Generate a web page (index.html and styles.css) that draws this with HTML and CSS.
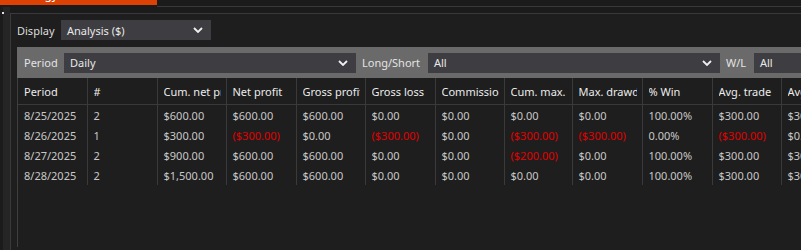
FILE: index.html
```html
<!DOCTYPE html>
<html lang="en">
<head>
  <meta charset="UTF-8" />
  <title>Strategy Analyzer</title>
  <link rel="stylesheet" href="styles.css">
</head>
<body>

  <div class="tabstrip">
    <div class="tab"><span>Strategy</span></div>
    <div class="tabline"></div>
  </div>

  <div class="workspace">
    <div class="rail"><span class="dot"></span></div>

    <div class="panel">
      <div class="display-row">
        <span class="label">Display</span>
        <div class="select">
          <span>Analysis ($)</span>
          <svg class="chev" width="10" height="6" viewBox="0 0 10 6"><polyline points="1,1 5,5 9,1" /></svg>
        </div>
      </div>

      <div class="gridbox">
        <div class="filters">
          <span class="flabel">Period</span>
          <div class="select">
            <span>Daily</span>
            <svg class="chev" width="10" height="6" viewBox="0 0 10 6"><polyline points="1,1 5,5 9,1" /></svg>
          </div>
          <span class="flabel">Long/Short</span>
          <div class="select">
            <span>All</span>
            <svg class="chev" width="10" height="6" viewBox="0 0 10 6"><polyline points="1,1 5,5 9,1" /></svg>
          </div>
          <span class="flabel">W/L</span>
          <div class="select">
            <span>All</span>
          </div>
        </div>

        <table class="results">
          <colgroup>
            <col style="width:69px"><col style="width:70px"><col style="width:69px"><col style="width:70px">
            <col style="width:69px"><col style="width:70px"><col style="width:69px"><col style="width:68px">
            <col style="width:70px"><col style="width:70px"><col style="width:69px"><col style="width:80px">
          </colgroup>
          <thead>
            <tr>
              <th><div>Period</div></th>
              <th><div>#</div></th>
              <th><div>Cum. net profit</div></th>
              <th><div>Net profit</div></th>
              <th><div>Gross profit</div></th>
              <th><div>Gross loss</div></th>
              <th><div>Commission</div></th>
              <th><div>Cum. max. run-up</div></th>
              <th><div>Max. drawdown</div></th>
              <th><div>% Win</div></th>
              <th><div>Avg. trade</div></th>
              <th><div>Avg. winner</div></th>
            </tr>
          </thead>
          <tbody>
            <tr>
              <td>8/25/2025</td><td>2</td><td>$600.00</td><td>$600.00</td><td>$600.00</td><td>$0.00</td>
              <td>$0.00</td><td>$0.00</td><td>$0.00</td><td>100.00%</td><td>$300.00</td><td>$300.00</td>
            </tr>
            <tr>
              <td>8/26/2025</td><td>1</td><td>$300.00</td><td class="neg">($300.00)</td><td>$0.00</td><td class="neg">($300.00)</td>
              <td>$0.00</td><td class="neg">($300.00)</td><td class="neg">($300.00)</td><td>0.00%</td><td class="neg">($300.00)</td><td>$0.00</td>
            </tr>
            <tr>
              <td>8/27/2025</td><td>2</td><td>$900.00</td><td>$600.00</td><td>$600.00</td><td>$0.00</td>
              <td>$0.00</td><td class="neg">($200.00)</td><td>$0.00</td><td>100.00%</td><td>$300.00</td><td>$300.00</td>
            </tr>
            <tr>
              <td>8/28/2025</td><td>2</td><td>$1,500.00</td><td>$600.00</td><td>$600.00</td><td>$0.00</td>
              <td>$0.00</td><td>$0.00</td><td>$0.00</td><td>100.00%</td><td>$300.00</td><td>$300.00</td>
            </tr>
          </tbody>
        </table>
      </div>
    </div>
  </div>

</body>
</html>
```

FILE: styles.css
```css
body {
  margin: 0;
  height: 250px;
  overflow: hidden;
  background-color: #1b1b1c;
  color: #dcdcdc;
  font-family: "Noto Sans", "Open Sans", sans-serif;
  font-size: 11px;
}

/* Barra de abas */
.tabstrip {
  display: flex;
  height: 7px;
}

.tab {
  width: 157px;
  height: 5px;
  background-color: #dd4204;
  color: white;
  overflow: hidden;
  position: relative;
}

.tab span {
  position: absolute;
  left: 11px;
  bottom: 4px;
  font-size: 12px;
  line-height: 12px;
}

.tabline {
  flex: 1;
  height: 6px;
  border-bottom: 1px solid #3a3a3c;
}

.workspace {
  display: flex;
  height: 243px;
}

.rail {
  width: 10px;
  background-color: #252526;
  border-left: 3px solid #1b1b1c;
  box-sizing: border-box;
  position: relative;
}

.dot {
  position: absolute;
  left: -1px;
  top: 5px;
  width: 2px;
  height: 2px;
  background-color: #e0e0e0;
}

.panel {
  flex: 1;
  margin-top: 6px;
  border-top: 1px solid #3a3a3c;
  border-left: 1px solid #3a3a3c;
  background-color: #1e1e1e;
  padding: 6px 0 0 6px;
  min-width: 0;
}

.display-row {
  display: grid;
  grid-template-columns: 38px 150px;
  column-gap: 6px;
  align-items: center;
  height: 20px;
}

.label {
  color: #dcdcdc;
}

.select {
  display: flex;
  align-items: center;
  justify-content: space-between;
  box-sizing: border-box;
  height: 20px;
  padding: 0 8px 0 6px;
  background-color: #3e3e42;
  color: #e8e8e8;
  overflow: hidden;
  white-space: nowrap;
}

.chev {
  fill: none;
  stroke: #f0f0f0;
  stroke-width: 1.8;
  flex-shrink: 0;
}

.gridbox {
  margin-top: 7px;
  border-left: 1px solid #3f3f41;
  height: 200px;
}

.filters {
  display: grid;
  grid-template-columns: 34px 292px 60px 292px 22px 1fr;
  column-gap: 6px;
  align-items: center;
  height: 31px;
  padding-left: 7px;
  background-color: #6a6a6a;
  white-space: nowrap;
  margin-left: -1px;
}

.flabel {
  color: #e4e4e4;
}

/* Tabela de resultados */
.results {
  border-collapse: collapse;
  table-layout: fixed;
  width: 824px;
}

.results th,
.results td {
  border-right: 1px solid #3a3a3c;
  padding: 0 0 0 6px;
  text-align: left;
  white-space: nowrap;
  overflow: hidden;
}

.results th {
  height: 26px;
  font-weight: normal;
  color: #ececec;
  border-bottom: 1px solid #3a3a3c;
}

.results th div {
  overflow: hidden;
  margin-right: 5px;
}

.results td {
  height: 20px;
  color: #c8c8c8;
}

.results td.neg {
  color: #e00000;
}
```
